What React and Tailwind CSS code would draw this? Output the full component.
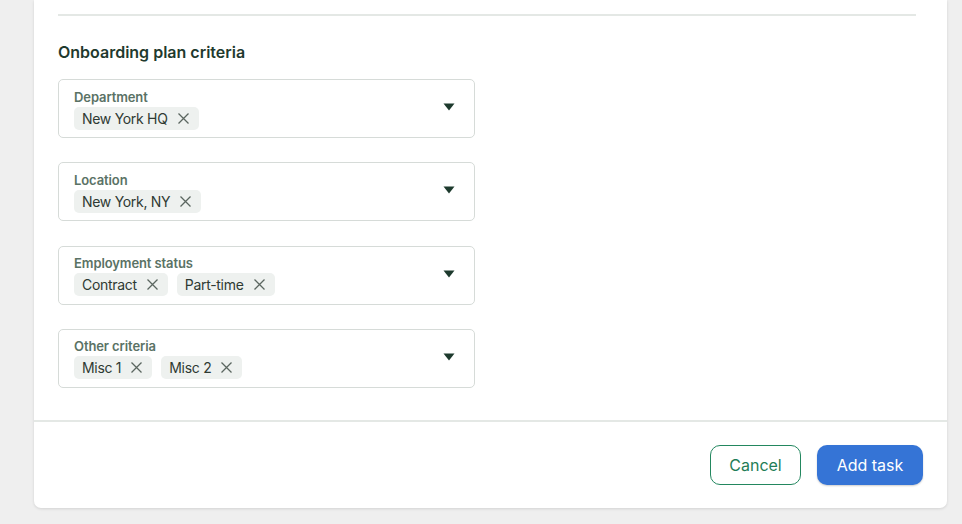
const fields = [
  { label: 'Department', chips: ['New York HQ'] },
  { label: 'Location', chips: ['New York, NY'] },
  { label: 'Employment status', chips: ['Contract', 'Part-time'] },
  { label: 'Other criteria', chips: ['Misc 1', 'Misc 2'] },
];

function Chip({ text }) {
  return (
    <span className="inline-flex h-[23px] items-center gap-[10px] rounded-[5px] bg-[#eef1ef] pl-2 pr-[10px] text-[14px] tracking-[-0.3px] text-[#2e3a33]">
      {text}
      <svg width="11" height="11" viewBox="0 0 11 11">
        <path d="M0.5 0.5 L10.5 10.5 M10.5 0.5 L0.5 10.5" stroke="#5b6660" strokeWidth="1.3" />
      </svg>
    </span>
  );
}

function CriteriaField({ label, chips }) {
  return (
    <div className="flex h-[59px] w-[417px] items-center justify-between rounded-[5px] border border-[#d6dbd8] pl-[15px] pr-[19px]">
      <div className="flex flex-col">
        <span className="text-[13px] font-semibold leading-[18px] tracking-[-0.1px] text-[#5a7265]">{label}</span>
        <div className="mt-[1px] flex gap-[9px]">
          {chips.map((c) => (
            <Chip key={c} text={c} />
          ))}
        </div>
      </div>
      <svg width="12" height="8" viewBox="0 0 12 8" className="mb-[3px]">
        <path d="M0.5 0.5 L11.5 0.5 L6 7.5 Z" fill="#1d3a2d" />
      </svg>
    </div>
  );
}

export default function App() {
  return (
    <div
      className="min-h-screen bg-[#efefef] pl-[34px] pr-[15px]"
      style={{ fontFamily: 'Inter, "Noto Sans", sans-serif' }}
    >
      <div className="rounded-b-[7px] bg-white shadow-[0_1px_3px_rgba(0,0,0,0.12)]">
        <div className="pl-6 pr-[31px] pt-[14px]">
          <div className="h-[2px] bg-[#e4e8e5]" />
          <h2 className="mt-[26px] text-[16px] font-semibold leading-5 text-[#1f3a2e]">
            Onboarding plan criteria
          </h2>
          <div className="mt-[17px] flex flex-col gap-[24.34px] pb-[32px]">
            {fields.map((f) => (
              <CriteriaField key={f.label} {...f} />
            ))}
          </div>
        </div>
        <div className="flex justify-end gap-4 border-t-2 border-[#e4e8e5] px-6 pb-[23px] pt-[23px]">
          <button className="h-10 w-[91px] rounded-[10px] border border-[#23875f] text-[16px] text-[#1f7d57]">
            Cancel
          </button>
          <button className="h-10 w-[106px] rounded-[10px] bg-[#3574d6] text-[16px] text-white shadow-[0_1px_2px_rgba(0,0,0,0.2)]">
            Add task
          </button>
        </div>
      </div>
    </div>
  );
}
